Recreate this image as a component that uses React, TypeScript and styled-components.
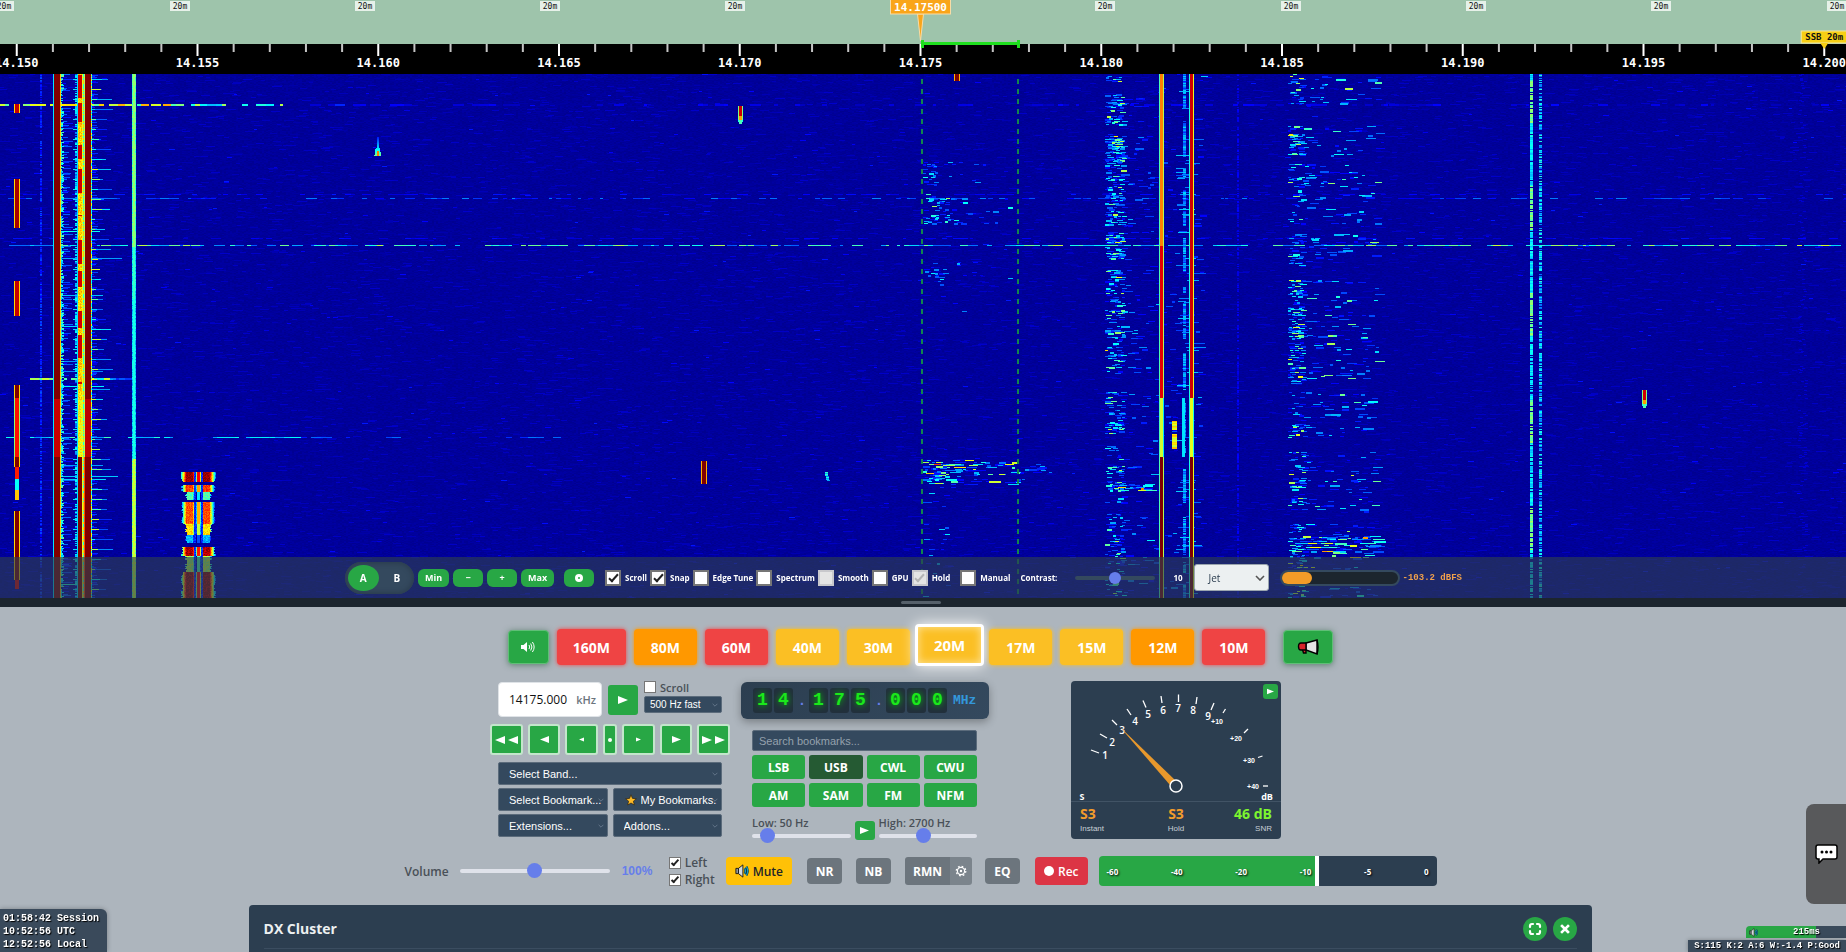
import React, { useEffect, useRef } from "react";
import styled, { createGlobalStyle, css } from "styled-components";

const ui = '"Open Sans", "Noto Sans", sans-serif';
const arial = '"Liberation Sans", Arial, sans-serif';
const mono = '"Liberation Mono", "Courier New", monospace';
const rulerMono = '"DejaVu Sans Mono", Consolas, monospace';

const green = "#28a745";
const navy = "#2c3e50";
const slate = "#34495e";
const accent = "#667eea";

const GlobalStyle = createGlobalStyle`
  *, *::before, *::after { box-sizing: border-box; }
  body { margin: 0; background: #adb5bd; font-family: ${ui}; }
  button, input, select { font-family: inherit; margin: 0; }
  button { padding: 0; border: 0; cursor: pointer; }
`;

/* ---------- waterfall painting ---------- */

const WF_W = 1846;
const WF_H = 524;

function makeRng(seed: number) {
  let s = seed;
  return () => {
    s = (s * 1664525 + 1013904223) >>> 0;
    return s / 4294967296;
  };
}

const clamp = (v: number) => Math.max(0, Math.min(1, v));

function paintWaterfall(ctx: CanvasRenderingContext2D) {
  const rnd = makeRng(20175);
  const f = new Float32Array(WF_W * WF_H);
  const put = (x: number, y: number, v: number) => {
    x |= 0;
    y |= 0;
    if (x >= 0 && x < WF_W && y >= 0 && y < WF_H) f[y * WF_W + x] = v;
  };
  const lift = (x: number, y: number, v: number) => {
    x |= 0;
    y |= 0;
    if (x >= 0 && x < WF_W && y >= 0 && y < WF_H && f[y * WF_W + x] < v) f[y * WF_W + x] = v;
  };
  const run = (x: number, y: number, len: number, v: number, h = 1) => {
    for (let j = 0; j < h; j++) for (let i = 0; i < len; i++) lift(x + i, y + j, v);
  };

  // noise floor
  for (let y = 0; y < WF_H; y++)
    for (let x = 0; x < WF_W; x += 2) {
      const v = 0.016 + rnd() * 0.02;
      put(x, y, v);
      put(x + 1, y, v);
    }
  for (let i = 0; i < 13000; i++) run(rnd() * WF_W, rnd() * WF_H, 3 + rnd() * 7, 0.03 + rnd() * 0.045);
  for (let i = 0; i < 450; i++) run(rnd() * WF_W, rnd() * WF_H, 2 + rnd() * 4, 0.09 + rnd() * 0.06);

  // horizontal static crashes
  const crash = (y: number, x0: number, x1: number, lo: number, hi: number, fill: number, h = 1) => {
    let x = x0;
    while (x < x1) {
      const len = 2 + rnd() * 9;
      if (rnd() < fill) run(x, y, len, lo + rnd() * (hi - lo), h);
      x += len;
    }
  };
  crash(171, 0, WF_W, 0.2, 0.5, 0.75);
  crash(171, 0, WF_W, 0.45, 0.58, 0.08);
  crash(124, 0, WF_W, 0.1, 0.26, 0.4);
  crash(120, 0, WF_W, 0.08, 0.15, 0.3);
  crash(164, 0, WF_W, 0.08, 0.14, 0.35);
  crash(363, 0, 300, 0.25, 0.45, 0.6);
  crash(363, 300, 560, 0.1, 0.25, 0.5);
  crash(30, 0, 165, 0.4, 0.72, 0.85, 2);
  crash(30, 165, 285, 0.25, 0.6, 0.65, 2);
  crash(30, 285, 370, 0.08, 0.2, 0.5, 2);
  crash(30, 370, WF_W, 0.05, 0.13, 0.35, 2);
  crash(304, 30, 105, 0.3, 0.65, 0.8, 2);
  crash(304, 105, 135, 0.1, 0.25, 0.6, 2);

  // faint carriers
  for (let y = 0; y < WF_H; y++) {
    if (rnd() < 0.75) run(40, y, 2, 0.09 + rnd() * 0.12);
    if (rnd() < 0.6) run(1237, y, 2, 0.07 + rnd() * 0.06);
    if (rnd() < 0.3) run(1798 + rnd() * 8, y, 3, 0.08);
  }

  // splatter and strong carriers on the left
  for (let y = 0; y < WF_H; y++) {
    const deep = y > 382;
    const mid = y > 324 && y <= 382;
    if (rnd() < 0.85) run(60, y, 1 + rnd() * 3, 0.28 + rnd() * 0.2);
    if (rnd() < 0.3) run(63, y, 2 + rnd() * 8, 0.1 + rnd() * 0.14);
    if (rnd() < 0.6) run(75, y, 3, 0.2 + rnd() * 0.2);
    if (rnd() < 0.5) run(91, y, 2 + rnd() * 5, 0.08 + rnd() * 0.12);
    if (y % 10 === 5) {
      run(91, y, 3 + rnd() * 8, 0.3 + rnd() * 0.3);
      run(95, y, 4 + rnd() * 14, 0.15 + rnd() * 0.2);
      run(73, y, 6, 0.35);
    }
    if (rnd() < 0.02) run(60, y, 18 + rnd() * 45, 0.22 + rnd() * 0.2);
    put(53, y, 0.35);
    for (let x = 54; x < 60; x++) put(x, y, mid ? 0.93 : 1);
    put(60, y, 0.68);
    put(77, y, 0.35);
    const hot = Math.sin(y / 13) + Math.sin(y / 5.3) > 0;
    for (let x = 78; x < 82; x++) put(x, y, deep ? 1 : mid ? 0.55 + rnd() * 0.15 : hot ? 0.92 : 0.62 + rnd() * 0.12);
    put(82, y, 0.6);
    put(83, y, rnd() < 0.5 ? 0.4 : 0.68);
    put(84, y, deep ? 0.8 : 0.55);
    for (let x = 85; x < 91; x++) put(x, y, mid ? 0.94 : 1);
    put(91, y, rnd() < 0.5 ? 0.38 : 0.6);
    const c = y > 384 ? 0.58 : y > 224 ? 0.4 : y > 172 ? 0.43 : 0.52;
    for (let x = 132; x < 136; x++) put(x, y, x === 132 || x === 135 ? c - 0.14 * rnd() : c);
  }

  // keyed carrier
  const keyed = (cx: number, y0: number, y1: number, core: number, edge = 0.66) => {
    for (let y = y0; y < y1; y++) {
      for (let x = cx - 2; x <= cx + 1; x++) put(x, y, core);
      put(cx - 3, y, edge);
      put(cx + 2, y, edge);
    }
  };
  keyed(17, 30, 39, 0.93);
  keyed(17, 105, 154, 0.96);
  keyed(17, 207, 242, 0.93);
  keyed(17, 311, 324, 1);
  keyed(17, 324, 383, 0.86, 0.52);
  keyed(17, 383, 393, 1);
  for (let y = 393; y < 426; y++) run(15, y, 4, y < 405 ? 0.85 : y < 416 ? 0.38 : 0.68);
  keyed(17, 437, 506, 1);
  for (let y = 506; y < 515; y++) run(15, y, 4, 0.9);
  keyed(704, 387, 410, 1, 0.7);
  keyed(957, 0, 7, 1, 0.7);

  // short pings
  for (let y = 63; y < 82; y++) {
    const half = y < 74 ? 1 : 2 + (y - 74) / 6;
    run(378 - half, y, half * 2, 0.15 + ((y - 63) / 19) * 0.35);
    if (y > 76) run(377, y, 2, 0.75);
  }
  const ping = (cx: number, y0: number) => {
    for (let y = y0; y < y0 + 18; y++) {
      const t = (y - y0) / 18;
      const core = t < 0.55 ? 0.92 : t < 0.75 ? 0.72 : 0.45;
      const edge = t < 0.75 ? 0.5 : 0.4;
      for (let x = cx - 2; x < cx + 3; x++) {
        const side = x === cx - 2 || x === cx + 2;
        if (!(side && t > 0.85)) put(x, y, side ? edge : core);
      }
    }
  };
  ping(740, 32);
  ping(1644, 316);
  for (let y = 398; y < 407; y++) run(825 + Math.floor((y - 398) / 4), y, 3, 0.25 + rnd() * 0.2);

  // burst near 14.155
  const blocks: [number, number, number][] = [
    [398, 408, 0.98],
    [411, 418, 0.82],
    [418, 426, 0.45],
    [428, 450, 0.8],
    [450, 461, 0.66],
    [461, 469, 0.3],
    [473, 482, 0.95],
    [482, 498, 0.55],
    [498, 524, 0.98],
  ];
  blocks.forEach(([a, b, v]) => {
    for (let y = a; y < b; y++) {
      const shrink = Math.floor((v < 0.7 ? 4 : 0) + rnd() * 3);
      for (let x = 181 + shrink; x < 216 - shrink; x++) {
        const dx = Math.min(Math.abs(x - 189), Math.abs(x - 206));
        let val = v - Math.max(0, dx - 3) * 0.12 + (rnd() - 0.5) * 0.1;
        if (x === 194 || x === 195 || x === 201 || x === 202) val = 0.12 + rnd() * 0.1;
        if (x > 196 && x < 200) val = v - 0.1;
        if (val > 0.1) put(x, y, Math.min(1, val));
      }
    }
  });

  // speech energy
  const voice = (x0: number, x1: number, y0: number, y1: number, density: number, hi: number, maxLen = 6) => {
    for (let y = y0; y < y1; y += 1 + (rnd() < 0.6 ? 1 : 0)) {
      const gain = 0.4 + 0.6 * Math.abs(Math.sin(y / 6.1));
      for (let x = x0; x < x1; x += 3) {
        if (rnd() < density * gain) run(x + rnd() * 3, y, 2 + rnd() * maxLen, 0.12 + rnd() * rnd() * hi, rnd() < 0.25 ? 2 : 1);
      }
    }
  };
  voice(923, 934, 88, 124, 0.35, 0.45, 3);
  voice(934, 985, 88, 112, 0.06, 0.3, 4);
  voice(923, 945, 124, 150, 0.3, 0.5, 3);
  voice(940, 1012, 124, 150, 0.1, 0.5, 4);
  voice(923, 943, 189, 211, 0.28, 0.35, 4);
  voice(945, 1012, 160, 240, 0.012, 0.25, 4);
  voice(923, 940, 386, 411, 0.6, 0.8);
  voice(940, 1018, 386, 411, 0.26, 0.65, 10);
  voice(1018, 1050, 390, 408, 0.1, 0.3, 8);
  voice(923, 945, 411, 524, 0.06, 0.3, 4);

  const leftVoice: [number, number, number][] = [
    [0, 8, 0.3],
    [20, 52, 0.65],
    [60, 84, 0.75],
    [84, 152, 0.65],
    [158, 186, 0.8],
    [196, 232, 0.5],
    [236, 300, 0.45],
    [318, 360, 0.5],
    [372, 386, 0.25],
    [392, 430, 0.35],
    [440, 524, 0.4],
  ];
  leftVoice.forEach(([a, b, d]) => {
    voice(1105, 1121, a, b, d, 0.55, 4);
    voice(1121, 1148, a, b, 0.06, 0.28, 7);
  });
  voice(1108, 1119, 66, 80, 0.8, 0.65, 4);
  voice(1148, 1200, 0, 524, 0.022, 0.25, 6);
  voice(1110, 1150, 410, 418, 0.3, 0.75, 8);

  const rightVoice: [number, number, number][] = [
    [0, 30, 0.5],
    [52, 82, 0.65],
    [90, 150, 0.25],
    [160, 192, 0.45],
    [206, 262, 0.5],
    [262, 310, 0.65],
    [318, 366, 0.3],
    [378, 440, 0.35],
    [450, 524, 0.4],
  ];
  rightVoice.forEach(([a, b, d]) => {
    voice(1288, 1303, a, b, d, 0.55, 5);
    voice(1303, 1376, a, b, 0.08, 0.5, 8);
  });
  voice(1290, 1380, 462, 484, 0.28, 0.8, 10);
  voice(1288, 1300, 250, 262, 0.6, 0.8);

  // carriers on the right
  for (let y = 0; y < WF_H; y++) {
    const weak = y >= 324 && y < 383;
    const core1 = weak ? 0.58 : y < 172 ? 0.75 : y < 324 ? 0.9 : 1;
    put(1159, y, 0.45);
    for (let x = 1160; x < 1163; x++) put(x, y, core1);
    put(1163, y, weak ? 0.35 : 0.55);
    const core2 = weak ? 0.6 : y < 324 ? 0.92 : 1;
    put(1189, y, 0.4);
    for (let x = 1190; x < 1193; x++) put(x, y, core2);
    put(1193, y, weak ? 0.4 : 0.6);
    if (Math.sin(y / 9) + Math.sin(y / 3.7) + rnd() > 0.1) run(1183, y, 3, 0.16 + rnd() * 0.18);
    if (rnd() < 0.1) run(1176 + rnd() * 12, y, 6 + rnd() * 14, 0.18 + rnd() * 0.15);
    if (rnd() < 0.85) run(1530, y, 3, 0.3 + rnd() * 0.1 + (Math.sin(y / 17) > 0.3 ? 0.14 : 0));
    if (rnd() < 0.68) run(1539, y, 3, 0.22 + rnd() * 0.2);
    if (weak) run(1182, y, 3, 0.35);
  }
  for (let y = 347; y < 375; y++) if (y < 356 || y > 359) run(1172, y, 5, 0.55 + rnd() * 0.15);

  const img = ctx.createImageData(WF_W, WF_H);
  for (let i = 0; i < f.length; i++) {
    const v = f[i];
    img.data[i * 4] = 255 * clamp(1.5 - Math.abs(4 * v - 3));
    img.data[i * 4 + 1] = 255 * clamp(1.5 - Math.abs(4 * v - 2));
    img.data[i * 4 + 2] = 255 * clamp(1.5 - Math.abs(4 * v - 1));
    img.data[i * 4 + 3] = 255;
  }
  ctx.putImageData(img, 0, 0);
}

/* ---------- frequency ruler ---------- */

const at = (px: number) => `${(px / WF_W) * 100}%`;
const khzAt = (khz: number) => at(920.5 + (khz - 14175) * 36.15);

const RulerSvg = styled.svg`
  display: block;
  width: 100%;
  height: 74px;
  background: #9ec4ab;
`;

function Ruler() {
  const bands = [4, 180, 365, 550, 735, 920, 1105, 1291, 1476, 1661, 1837];
  const ticks = Array.from({ length: 52 }, (_, i) => 14150 + i);
  return (
    <RulerSvg role="img" aria-label="Frequency scale">
      <rect x="0" y="44" width="100%" height="30" fill="#000" />
      {bands.map((b) => (
        <svg key={b} x={at(b)} overflow="visible">
          <rect x="-10" y="1" width="20" height="10" fill="#e6f1e9" />
          <text x="0" y="9" textAnchor="middle" fontFamily={rulerMono} fontSize="8" fill="#111">20m</text>
        </svg>
      ))}
      {ticks.map((k) => (
        <svg key={k} x={khzAt(k)} overflow="visible">
          {k % 5 === 0 ? (
            <>
              <rect x="-1" y="44" width="2" height="12" fill="#fff" />
              <text x="0" y="67" textAnchor="middle" fontFamily={rulerMono} fontSize="12" fontWeight="700" fill="#fff">
                {(k / 1000).toFixed(3)}
              </text>
            </>
          ) : (
            <rect x="-1" y="44" width="2" height="8" fill="#c4c4c4" />
          )}
        </svg>
      ))}
      <svg x={khzAt(14200)} overflow="visible">
        <rect x="-23" y="31" width="46" height="12" fill="#f7cf15" stroke="#f3e6a0" />
        <text x="-19" y="40" fontFamily={rulerMono} fontSize="9" fontWeight="700" fill="#111">SSB 20m</text>
        <path d="M-4 43H4L0 49Z" fill="#f7cf15" />
      </svg>
      <svg x={at(922)} overflow="visible">
        <rect x="0" y="42" width="97" height="3" fill="#1fe01f" />
        <rect x="-1" y="40" width="3" height="8" fill="#1fe01f" />
        <rect x="95" y="40" width="3" height="8" fill="#1fe01f" />
      </svg>
      <svg x={khzAt(14175)} overflow="visible">
        <path d="M-3 14H3L0 41Z" fill="#f9a51a" stroke="#f8dca6" />
        <rect x="-30" y="-1" width="60" height="15" fill="#f9a51a" stroke="#f8dca6" />
        <text x="0" y="11" textAnchor="middle" fontFamily={rulerMono} fontSize="11" fontWeight="700" fill="#fff">14.17500</text>
      </svg>
    </RulerSvg>
  );
}

const WaterfallArea = styled.section`
  position: relative;
  height: 524px;
  background: #00008c;
`;
const WaterfallCanvas = styled.canvas`
  display: block;
  width: 100%;
  height: 100%;
`;
const Passband = styled.svg`
  position: absolute;
  inset: 0;
  width: 100%;
  height: 100%;
`;

function Waterfall({ children }: { children: React.ReactNode }) {
  const ref = useRef<HTMLCanvasElement>(null);
  useEffect(() => {
    const ctx = ref.current?.getContext("2d");
    if (ctx) paintWaterfall(ctx);
  }, []);
  return (
    <WaterfallArea>
      <WaterfallCanvas ref={ref} width={WF_W} height={WF_H} />
      <Passband aria-hidden="true">
        <g stroke="#12854e" strokeWidth="2" strokeDasharray="5 5">
          <line x1={at(922)} x2={at(922)} y1="5" y2="100%" />
          <line x1={at(1018)} x2={at(1018)} y1="5" y2="100%" />
        </g>
      </Passband>
      {children}
    </WaterfallArea>
  );
}

/* ---------- shared controls ---------- */

const Range = styled.input.attrs({ type: "range" })<{ $thin?: boolean }>`
  appearance: none;
  display: block;
  width: 100%;
  height: ${(p) => (p.$thin ? 12 : 15)}px;
  background: transparent;
  &::-webkit-slider-runnable-track {
    height: 4px;
    border-radius: 2px;
    background: ${(p) => (p.$thin ? slate : "#dfe2ea")};
  }
  &::-webkit-slider-thumb {
    appearance: none;
    width: ${(p) => (p.$thin ? 12 : 15)}px;
    height: ${(p) => (p.$thin ? 12 : 15)}px;
    margin-top: ${(p) => (p.$thin ? -4 : -6)}px;
    border-radius: 50%;
    background: ${accent};
  }
`;

const Tick = styled.input.attrs({ type: "checkbox" })<{ $size?: number }>`
  appearance: none;
  flex: none;
  display: grid;
  place-items: center;
  width: ${(p) => p.$size ?? 12}px;
  height: ${(p) => p.$size ?? 12}px;
  border: ${(p) => (p.$size ? 2 : 1)}px solid #767676;
  background: #fff;
  &:checked::before {
    content: "";
    width: ${(p) => (p.$size ? 5 : 4)}px;
    height: ${(p) => (p.$size ? 10 : 8)}px;
    margin-bottom: 3px;
    border: solid #222;
    border-width: 0 2px 2px 0;
    transform: rotate(42deg);
  }
  &:disabled {
    background: #e4e4e4;
    border-color: #c8c8cc;
  }
  &:disabled::before {
    border-color: #b4b4b4;
  }
`;

const chevron = (color: string) =>
  `url("data:image/svg+xml,%3Csvg xmlns='http://www.w3.org/2000/svg' viewBox='0 0 10 6'%3E%3Cpath d='M1 1l4 4 4-4' fill='none' stroke='%23${color}' stroke-width='1.6'/%3E%3C/svg%3E")`;

const Select = styled.select<{ $small?: boolean }>`
  appearance: none;
  display: block;
  width: 100%;
  height: ${(p) => (p.$small ? 17 : 23)}px;
  padding: 0 4px 0 ${(p) => (p.$small ? 5 : 10)}px;
  border: 1px solid #5b6b7b;
  border-radius: 2px;
  background: ${slate} ${chevron("64778a")} no-repeat right 3px center / 6px 4px;
  color: #fff;
  font: ${(p) => (p.$small ? 10 : 11)}px ${arial};
`;

const Arrow = ({ size = 9, left = false }: { size?: number; left?: boolean }) => (
  <svg width={size} height={size} viewBox="0 0 10 10" aria-hidden="true">
    <path d={left ? "M10 1V9L0 5Z" : "M0 1V9L10 5Z"} fill="#fff" />
  </svg>
);

const SpeakerColor = ({ size = 14 }: { size?: number }) => (
  <svg width={size} height={size} viewBox="0 0 16 16" aria-hidden="true">
    <path d="M1 5h3v6H1Z" fill="#8f979d" stroke="#111" />
    <path d="M4 5l5-4v14l-5-4Z" fill="#d5dadd" stroke="#111" />
    <path d="M11 5q2 3 0 6M13 3q3 5 0 10" fill="none" stroke="#0a3a4a" strokeWidth="2.6" />
    <path d="M11 5q2 3 0 6M13 3q3 5 0 10" fill="none" stroke="#1aa0c8" strokeWidth="1.2" />
  </svg>
);

/* ---------- overlay toolbar ---------- */

const Toolbar = styled.div`
  position: absolute;
  left: 0;
  right: 0;
  bottom: 0;
  display: flex;
  align-items: center;
  justify-content: center;
  height: 41px;
  padding-right: 39px;
  background: rgba(44, 62, 80, 0.65);
  color: #fff;
  font-size: 8px;
  font-weight: 700;
`;
const VfoSwitch = styled.div`
  display: flex;
  gap: 3px;
  width: 69px;
  height: 32px;
  padding: 3px 2px 3px 3px;
  border-radius: 16px;
  background: ${slate};
  box-shadow: inset 0 0 4px 2px ${navy};
  margin-right: 4px;
`;
const VfoButton = styled.button<{ $on?: boolean }>`
  flex: 1;
  border-radius: 50%;
  background: ${(p) => (p.$on ? green : "transparent")};
  color: #fff;
  font-size: 10px;
  font-weight: 700;
`;
const MiniButton = styled.button<{ $w: number }>`
  width: ${(p) => p.$w}px;
  height: 18px;
  margin-right: 4px;
  border-radius: 6px;
  background: ${green};
  color: #fff;
  font-size: 9px;
  font-weight: 700;
  line-height: 16px;
`;
const Dot = styled.span`
  display: block;
  width: 8px;
  height: 8px;
  margin: 0 auto;
  border: 3px solid #fff;
  border-radius: 50%;
`;
const Checks = styled.div`
  display: flex;
  gap: 3px;
  margin: 0 10px 0 7px;
`;
const CheckLabel = styled.label`
  display: flex;
  align-items: center;
  gap: 4px;
  white-space: nowrap;
`;
const ContrastLabel = styled.label`
  display: flex;
  align-items: center;
  gap: 18px;
  margin: 0 18px 0 10px;
  input { width: 80px; }
`;
const PaletteSelect = styled.select`
  appearance: none;
  width: 75px;
  height: 27px;
  margin: 0 11px;
  padding: 0 4px;
  text-indent: 10px;
  border: 1px solid #9aa5ae;
  border-radius: 3px;
  background: #ecf0f1 ${chevron("555555")} no-repeat right 3px center / 10px 6px;
  color: ${navy};
  font-size: 10px;
`;
const LevelTrack = styled.div`
  width: 120px;
  height: 16px;
  border: 2px solid ${slate};
  border-radius: 8px;
  background: #1c252e;
`;
const LevelFill = styled.div`
  width: 26%;
  height: 100%;
  border-radius: 6px;
  background: #f39c28;
`;
const LevelText = styled.output`
  margin-left: 3px;
  color: #f0a04c;
  font: 700 9px ${mono};
`;

const Divider = styled.div`
  display: flex;
  justify-content: center;
  align-items: center;
  height: 9px;
  padding-right: 5px;
  background: #1c252e;
  &::after {
    content: "";
    width: 40px;
    height: 3px;
    border-radius: 2px;
    background: #56606a;
  }
`;

/* ---------- panel ---------- */

const Page = styled.div`
  display: flex;
  flex-direction: column;
  min-height: 100vh;
`;
const Panel = styled.main`
  flex: 1;
  display: flex;
  flex-direction: column;
  align-items: center;
  padding: 17px 5px 0 0;
  background: #adb5bd;
`;
const BandRow = styled.div`
  display: flex;
  align-items: center;
  gap: 8px;
`;
const IconButton = styled.button<{ $w: number }>`
  display: grid;
  place-items: center;
  width: ${(p) => p.$w}px;
  height: 34px;
  border: 1px solid #5fbf76;
  border-radius: 4px;
  background: ${green};
  box-shadow: 0 1px 6px rgba(40, 90, 60, 0.6);
`;
const BandButton = styled.button<{ $bg: string; $on?: boolean }>`
  min-width: 63px;
  height: 36px;
  padding: 0 16px;
  border-radius: 4px;
  background: ${(p) => p.$bg};
  box-shadow: 0 0 4px ${(p) => p.$bg};
  color: #fff;
  font-size: 14px;
  font-weight: 700;
  ${(p) =>
    p.$on &&
    css`
      height: 42px;
      margin: 0 -3px 4px;
      border: 3px solid #fff;
      box-shadow: 0 0 14px #fff, inset 0 0 8px #fde6a4;
      font-size: 15px;
    `}
`;
const Spacer = styled.span`
  width: 2px;
`;

const Controls = styled.div`
  display: flex;
  align-items: flex-start;
  gap: 11px;
  margin-top: 11px;
  padding-right: 70px;
`;
const TuneColumn = styled.div`
  width: 240px;
`;
const TuneTop = styled.div`
  display: flex;
  gap: 6px;
  height: 36px;
  padding: 0 8px;
`;
const FreqBox = styled.label`
  display: flex;
  align-items: center;
  width: 104px;
  height: 35px;
  margin-top: 1px;
  padding: 0 5px 0 10px;
  border: 1px solid #dfe3e7;
  border-radius: 4px;
  background: #fff;
  color: #6c757d;
  font-size: 11px;
  font-weight: 600;
  input {
    flex: 1;
    min-width: 0;
    padding: 0;
    border: 0;
    outline: 0;
    color: #111;
    font-size: 12px;
  }
`;
const GoButton = styled.button<{ $w: number; $h: number }>`
  display: grid;
  place-items: center;
  width: ${(p) => p.$w}px;
  height: ${(p) => p.$h}px;
  border-radius: 3px;
  background: ${green};
`;
const GoWrap = styled.div`
  padding-top: 4px;
`;
const ScrollBlock = styled.div`
  flex: 1;
  display: grid;
  gap: 3px;
  align-content: start;
`;
const FormLabel = styled.label<{ $size?: number }>`
  display: flex;
  align-items: center;
  gap: 4px;
  height: 12px;
  color: #495057;
  font-size: ${(p) => p.$size ?? 11}px;
  font-weight: 600;
`;
const StepRow = styled.div`
  display: flex;
  gap: 5px;
  margin-top: 7px;
`;
const StepButton = styled.button<{ $tiny?: boolean }>`
  flex: ${(p) => (p.$tiny ? "0 0 14px" : "1")};
  display: flex;
  justify-content: center;
  align-items: center;
  gap: 3px;
  height: 31px;
  border: 2px solid #c3e6cb;
  border-radius: 3px;
  background: ${green};
`;
const SelectGrid = styled.div`
  display: grid;
  grid-template-columns: 1fr 1fr;
  gap: 3px 5px;
  margin-top: 7px;
  padding: 0 8px;
`;
const WideCell = styled.div`
  grid-column: 1 / -1;
`;
const StarSelect = styled.div`
  position: relative;
  svg {
    position: absolute;
    left: 12px;
    top: 6px;
  }
  select { padding-left: 27px; }
`;

const ModeColumn = styled.div`
  width: 248px;
`;
const Readout = styled.div`
  display: flex;
  align-items: center;
  height: 37px;
  margin-top: 1px;
  padding: 0 12px;
  border-radius: 6px;
  background: linear-gradient(135deg, ${navy}, ${slate});
  box-shadow: 0 3px 8px rgba(0, 0, 0, 0.3);
`;
const Digit = styled.span`
  width: 19px;
  height: 25px;
  margin-right: 2px;
  border-radius: 3px;
  background: #22303c;
  color: #1be81b;
  font: 700 18px/24px ${mono};
  text-align: center;
  text-shadow: 0 0 6px #0c0;
`;
const Point = styled.span`
  width: 14px;
  color: ${accent};
  font: 700 14px/24px ${mono};
  text-align: center;
`;
const Unit = styled.span`
  margin-left: 4px;
  color: #3498db;
  font: 700 13px ${mono};
`;
const ModeBody = styled.div`
  padding: 11px 12px 0 11px;
`;
const Search = styled.input`
  display: block;
  width: 100%;
  height: 21px;
  padding: 0 6px;
  border: 1px solid #5b6b7b;
  border-radius: 2px;
  background: ${slate};
  color: #fff;
  font: 11px ${arial};
  &::placeholder { color: #94a1ad; }
`;
const ModeGrid = styled.div`
  display: grid;
  grid-template-columns: repeat(4, 1fr);
  gap: 4px;
  margin-top: 4px;
`;
const ModeButton = styled.button<{ $on?: boolean }>`
  height: 24px;
  border-radius: 3px;
  background: ${(p) => (p.$on ? "#255a33" : green)};
  color: #fff;
  font-size: 12px;
  font-weight: 700;
`;
const FilterRow = styled.div`
  display: flex;
  gap: 4px;
  margin-top: 9px;
`;
const FilterField = styled.div`
  flex: 1;
  white-space: nowrap;
`;
const FilterGo = styled.div`
  padding-top: 5px;
`;

const Meter = styled.section`
  position: relative;
  width: 210px;
  margin-left: 71px;
  border-radius: 4px;
  background: ${navy};
  svg { display: block; }
`;
const MeterGo = styled.div`
  position: absolute;
  top: 3px;
  right: 3px;
`;
const MeterReadouts = styled.div`
  display: grid;
  grid-template-columns: repeat(3, 1fr);
  height: 38px;
  padding: 3px 9px;
  border-top: 1px solid #415365;
`;
const Reading = styled.div<{ $align: string; $color: string }>`
  color: #c8cfd6;
  font: 8px/10px ${arial};
  text-align: ${(p) => p.$align};
  strong {
    display: block;
    margin-bottom: 1px;
    color: ${(p) => p.$color};
    font: 700 14px/18px ${ui};
  }
`;

const marks: [string, number, number, number, number, number, number][] = [
  ["1", 20, 69, 28, 72, 34, 74],
  ["2", 29, 53, 36, 57, 41, 61],
  ["3", 41, 39, 46, 44, 51, 49],
  ["4", 56, 28, 60, 34, 64, 40],
  ["5", 72, 19.5, 75, 26.5, 77, 33],
  ["6", 90, 15, 91, 22, 92, 29],
  ["7", 107.5, 13.5, 107.5, 21, 107, 27],
  ["8", 126, 16, 125, 23, 122, 29],
  ["9", 143, 22, 140, 29, 137, 35],
  ["+10", 154.5, 28, 152, 32, 146, 40],
  ["+20", 177, 48, 173, 52, 165, 57],
  ["+30", 191.5, 75, 187, 76.5, 178, 79],
  ["+40", 197, 105, 192, 105, 182, 105],
];

function SMeter() {
  return (
    <Meter>
      <svg width="210" height="120" viewBox="0 0 210 120" role="img" aria-label="Signal meter">
        {marks.map(([t, x1, y1, x2, y2, tx, ty]) => (
          <g key={t}>
            <line x1={x1} y1={y1} x2={x2} y2={y2} stroke="#fff" strokeWidth="1.3" />
            <text x={tx} y={ty + (t.length > 1 ? 2.5 : 3.5)} textAnchor="middle" fill="#fff" fontFamily={t.length > 1 ? arial : ui} fontWeight={t.length > 1 ? 700 : 600} fontSize={t.length > 1 ? 7 : 10}>
              {t}
            </text>
          </g>
        ))}
        <text x="11" y="119" textAnchor="middle" fill="#fff" fontFamily={ui} fontWeight="700" fontSize="9">S</text>
        <text x="196" y="119" textAnchor="middle" fill="#fff" fontFamily={ui} fontWeight="700" fontSize="9">dB</text>
        <path d="M48.5 45.5L104 99L99 104Z" fill="#e8982c" />
        <circle cx="105" cy="105" r="6" fill={navy} stroke="#fff" strokeWidth="1.5" />
      </svg>
      <MeterReadouts>
        <Reading $align="left" $color="#f39c2c"><strong>S3</strong>Instant</Reading>
        <Reading $align="center" $color="#f39c2c"><strong>S3</strong>Hold</Reading>
        <Reading $align="right" $color="#7df52f"><strong>46 dB</strong>SNR</Reading>
      </MeterReadouts>
      <MeterGo>
        <GoButton $w={15} $h={15} aria-label="Meter mode"><Arrow size={7} /></GoButton>
      </MeterGo>
    </Meter>
  );
}

const AudioRow = styled.div`
  display: flex;
  align-items: center;
  margin-top: 13px;
`;
const VolumeLabel = styled.label`
  display: flex;
  align-items: center;
  gap: 11px;
  color: #495057;
  font-size: 12px;
  font-weight: 600;
  input { width: 150px; }
`;
const VolumeValue = styled.output`
  width: 47px;
  padding-left: 12px;
  color: ${accent};
  font: 700 12px ${arial};
`;
const Channels = styled.div`
  display: grid;
  gap: 5px;
  width: 57px;
  padding-left: 12px;
`;
const AudioButton = styled.button<{ $tone: "grey" | "yellow" | "red"; $gap: number }>`
  display: flex;
  align-items: center;
  justify-content: center;
  gap: 4px;
  min-width: 35px;
  height: ${(p) => (p.$tone === "grey" ? 26 : 28)}px;
  padding: 0 ${(p) => (p.$tone === "grey" ? 4 : 9)}px;
  margin-left: ${(p) => p.$gap}px;
  border-radius: 4px;
  background: ${(p) => ({ grey: "#6c757d", yellow: "#ffc107", red: "#dc3545" })[p.$tone]};
  color: ${(p) => (p.$tone === "yellow" ? "#212529" : "#fff")};
  font-size: 12px;
  font-weight: ${(p) => (p.$tone === "grey" ? 700 : 600)};
`;
const Split = styled.div`
  display: flex;
  height: 28px;
  margin-left: 14px;
  border-radius: 3px;
  overflow: hidden;
`;
const SplitMain = styled.button`
  width: 45px;
  background: #6c757d;
  color: #fff;
  font-size: 12px;
  font-weight: 700;
`;
const SplitGear = styled.button`
  display: grid;
  place-items: center;
  width: 22px;
  background: #7b848c;
`;
const RecDot = styled.span`
  width: 10px;
  height: 10px;
  border-radius: 50%;
  background: #fff;
`;
const AudioMeter = styled.div`
  display: flex;
  justify-content: space-between;
  align-items: center;
  width: 338px;
  height: 30px;
  margin-left: 11px;
  padding: 0 8px;
  border-radius: 4px;
  background: linear-gradient(90deg, ${green} 64%, #fff 64%, #fff 65%, ${navy} 65%);
  color: #fff;
  font-size: 8px;
  font-weight: 700;
  text-shadow: 1px 1px 2px #000;
`;

const Cluster = styled.section`
  flex: 1;
  width: 73%;
  margin-top: 19px;
  padding: 0 15px;
  border-radius: 4px 4px 0 0;
  background: ${navy};
`;
const ClusterHead = styled.header`
  display: flex;
  align-items: center;
  gap: 6px;
  height: 44px;
  padding-top: 4px;
  border-bottom: 1px solid #3b4d60;
  h2 {
    flex: 1;
    margin: 0;
    color: #ecf0f1;
    font-size: 14px;
    font-weight: 700;
  }
`;
const RoundButton = styled.button`
  display: grid;
  place-items: center;
  width: 24px;
  height: 24px;
  border-radius: 50%;
  background: ${green};
`;

/* ---------- floating widgets ---------- */

const Clock = styled.aside`
  position: fixed;
  left: 0;
  bottom: 0;
  padding: 3px 8px 1px 3px;
  border-radius: 0 6px 0 0;
  background: #3a4a5b;
  box-shadow: 0 0 5px rgba(0, 0, 0, 0.3);
  color: #fff;
  font: 700 10px/13px ${mono};
  text-shadow: 1px 1px 1px #000;
  white-space: pre;
`;
const ChatTab = styled.button`
  position: fixed;
  right: 0;
  bottom: 48px;
  display: grid;
  place-items: center;
  width: 40px;
  height: 100px;
  border-radius: 8px 0 0 8px;
  background: #58595b;
`;
const StatusStack = styled.aside`
  position: fixed;
  right: 0;
  bottom: 0;
  display: flex;
  flex-direction: column;
  align-items: flex-end;
  gap: 2px;
  color: #fff;
  font: 700 9px/12px ${mono};
  text-shadow: 1px 1px 1px #000;
`;
const Latency = styled.div`
  display: flex;
  align-items: center;
  justify-content: space-between;
  width: 100px;
  height: 12px;
  padding: 0 26px 0 3px;
  border-radius: 4px 0 0 0;
  background: linear-gradient(90deg, ${green} 70%, #3a4a5b 70%);
`;
const Conditions = styled.div`
  height: 12px;
  padding: 0 6px;
  background: #3a4a5b;
  box-shadow: 0 0 4px rgba(0, 0, 0, 0.3);
`;

const bandButtons: [string, string][] = [
  ["160M", "#ef4444"],
  ["80M", "#ff9800"],
  ["60M", "#ef4444"],
  ["40M", "#fbbf24"],
  ["30M", "#fbbf24"],
  ["20M", "#fbbf24"],
  ["17M", "#fbbf24"],
  ["15M", "#fbbf24"],
  ["12M", "#ff9800"],
  ["10M", "#ef4444"],
];
const checks: [string, boolean, boolean][] = [
  ["Scroll", true, false],
  ["Snap", true, false],
  ["Edge Tune", false, false],
  ["Spectrum", false, false],
  ["Smooth", false, true],
  ["GPU", false, false],
  ["Hold", true, true],
];

export default function App() {
  return (
    <Page>
      <GlobalStyle />
      <Ruler />
      <Waterfall>
        <Toolbar>
          <VfoSwitch>
            <VfoButton $on>A</VfoButton>
            <VfoButton>B</VfoButton>
          </VfoSwitch>
          <MiniButton $w={31}>Min</MiniButton>
          <MiniButton $w={30}>−</MiniButton>
          <MiniButton $w={30}>+</MiniButton>
          <MiniButton $w={33}>Max</MiniButton>
          <Spacer /><Spacer /><Spacer />
          <MiniButton $w={30} aria-label="Center"><Dot /></MiniButton>
          <Checks>
            {checks.map(([name, on, off]) => (
              <CheckLabel key={name}>
                <Tick $size={16} defaultChecked={on} disabled={off} />
                {name}
              </CheckLabel>
            ))}
          </Checks>
          <CheckLabel><Tick $size={16} />Manual</CheckLabel>
          <ContrastLabel>Contrast:<Range $thin defaultValue={50} /></ContrastLabel>
          10
          <PaletteSelect aria-label="Palette"><option>Jet</option></PaletteSelect>
          <LevelTrack><LevelFill /></LevelTrack>
          <LevelText>-103.2 dBFS</LevelText>
        </Toolbar>
      </Waterfall>
      <Divider />
      <Panel>
        <BandRow>
          <IconButton $w={41} aria-label="Audio">
            <svg width="14" height="12" viewBox="0 0 14 12" aria-hidden="true">
              <path d="M0 4h2.500L6 1v10L2.500 8H0Z" fill="#fff" />
              <path d="M8 4q1.500 2 0 4M9.700 2.500q2.500 3.500 0 7M11.400 1q3.500 5 0 10" fill="none" stroke="#fff" />
            </svg>
          </IconButton>
          {bandButtons.map(([name, bg]) => (
            <BandButton key={name} $bg={bg} $on={name === "20M"}>{name}</BandButton>
          ))}
          <Spacer />
          <IconButton $w={50} aria-label="Announcements">
            <svg width="22" height="16" viewBox="0 0 22 16" aria-hidden="true">
              <path d="M5 9h4v5H6.500Z" fill="#d8232a" stroke="#000" strokeWidth="1.400" />
              <path d="M9 4L20 1v14L9 11Z" fill="#e4e4e4" stroke="#000" strokeWidth="1.400" />
              <path d="M9 4H4Q1.500 4 1.500 7.500T4 11h5Z" fill="#d8232a" stroke="#000" strokeWidth="1.400" />
              <path d="M20 1q2 7 0 14" fill="none" stroke="#000" strokeWidth="1.400" />
            </svg>
          </IconButton>
        </BandRow>

        <Controls>
          <TuneColumn>
            <TuneTop>
              <FreqBox>
                <input defaultValue="14175.000" aria-label="Frequency" />
                kHz
              </FreqBox>
              <GoWrap><GoButton $w={30} $h={30} aria-label="Tune"><Arrow size={10} /></GoButton></GoWrap>
              <ScrollBlock>
                <FormLabel><Tick />Scroll</FormLabel>
                <Select $small aria-label="Tuning step"><option>500 Hz fast</option></Select>
              </ScrollBlock>
            </TuneTop>
            <StepRow>
              <StepButton aria-label="Back fastest"><Arrow size={10} left /><Arrow size={10} left /></StepButton>
              <StepButton aria-label="Back faster"><Arrow size={9} left /></StepButton>
              <StepButton aria-label="Back"><Arrow size={5} left /></StepButton>
              <StepButton $tiny aria-label="Round">
                <svg width="4" height="4" viewBox="0 0 4 4" aria-hidden="true"><circle cx="2" cy="2" r="2" fill="#fff" /></svg>
              </StepButton>
              <StepButton aria-label="Forward"><Arrow size={5} /></StepButton>
              <StepButton aria-label="Forward faster"><Arrow size={9} /></StepButton>
              <StepButton aria-label="Forward fastest"><Arrow size={10} /><Arrow size={10} /></StepButton>
            </StepRow>
            <SelectGrid>
              <WideCell><Select aria-label="Band"><option>Select Band...</option></Select></WideCell>
              <Select aria-label="Bookmark"><option>Select Bookmark...</option></Select>
              <StarSelect>
                <Select aria-label="My bookmarks"><option>My Bookmarks...</option></Select>
                <svg width="12" height="12" viewBox="0 0 12 12" aria-hidden="true">
                  <path d="M6 .8l1.500 3.600 3.800.3-2.900 2.500.9 3.800L6 9l-3.300 2 .9-3.800L.7 4.700l3.800-.3Z" fill="#fdb927" stroke="#2b2413" strokeWidth=".7" />
                </svg>
              </StarSelect>
              <Select aria-label="Extensions"><option>Extensions...</option></Select>
              <Select aria-label="Addons"><option>Addons...</option></Select>
            </SelectGrid>
          </TuneColumn>

          <ModeColumn>
            <Readout>
              <Digit>1</Digit><Digit>4</Digit><Point>.</Point>
              <Digit>1</Digit><Digit>7</Digit><Digit>5</Digit><Point>.</Point>
              <Digit>0</Digit><Digit>0</Digit><Digit>0</Digit>
              <Unit>MHz</Unit>
            </Readout>
            <ModeBody>
              <Search placeholder="Search bookmarks..." aria-label="Search bookmarks" />
              <ModeGrid>
                {["LSB", "USB", "CWL", "CWU", "AM", "SAM", "FM", "NFM"].map((m) => (
                  <ModeButton key={m} $on={m === "USB"}>{m}</ModeButton>
                ))}
              </ModeGrid>
              <FilterRow>
                <FilterField>
                  <FormLabel htmlFor="low">Low: 50 Hz</FormLabel>
                  <Range id="low" defaultValue={10} />
                </FilterField>
                <FilterGo><GoButton $w={20} $h={19} aria-label="Apply filter"><Arrow size={9} /></GoButton></FilterGo>
                <FilterField>
                  <FormLabel htmlFor="high">High: 2700 Hz</FormLabel>
                  <Range id="high" defaultValue={45} />
                </FilterField>
              </FilterRow>
            </ModeBody>
          </ModeColumn>

          <SMeter />
        </Controls>

        <AudioRow>
          <VolumeLabel>Volume<Range defaultValue={50} /></VolumeLabel>
          <VolumeValue>100%</VolumeValue>
          <Channels>
            <FormLabel $size={12}><Tick defaultChecked />Left</FormLabel>
            <FormLabel $size={12}><Tick defaultChecked />Right</FormLabel>
          </Channels>
          <AudioButton $tone="yellow" $gap={12}><SpeakerColor />Mute</AudioButton>
          <AudioButton $tone="grey" $gap={15}>NR</AudioButton>
          <AudioButton $tone="grey" $gap={14}>NB</AudioButton>
          <Split>
            <SplitMain>RMN</SplitMain>
            <SplitGear aria-label="RMN settings">
              <svg width="12" height="12" viewBox="0 0 12 12" aria-hidden="true">
                <circle cx="6" cy="6" r="3.600" fill="none" stroke="#fff" strokeWidth="1.200" />
                <circle cx="6" cy="6" r="4.800" fill="none" stroke="#fff" strokeWidth="1.200" strokeDasharray="1.800 1.970" />
                <circle cx="6" cy="6" r="1.200" fill="#fff" />
              </svg>
            </SplitGear>
          </Split>
          <AudioButton $tone="grey" $gap={13}>EQ</AudioButton>
          <AudioButton $tone="red" $gap={15}><RecDot />Rec</AudioButton>
          <AudioMeter>
            {["-60", "-40", "-20", "-10", "-5", "0"].map((v) => (
              <span key={v}>{v}</span>
            ))}
          </AudioMeter>
        </AudioRow>

        <Cluster>
          <ClusterHead>
            <h2>DX Cluster</h2>
            <RoundButton aria-label="Expand">
              <svg width="14" height="14" viewBox="0 0 14 14" aria-hidden="true">
                <path d="M2 5V4Q2 2 4 2H5M9 2h1q2 0 2 2V5M12 9v1q0 2-2 2H9M5 12H4Q2 12 2 10V9" fill="none" stroke="#fff" strokeWidth="2.200" strokeLinecap="round" />
              </svg>
            </RoundButton>
            <RoundButton aria-label="Close">
              <svg width="10" height="10" viewBox="0 0 10 10" aria-hidden="true">
                <path d="M2 2L8 8M8 2L2 8" stroke="#fff" strokeWidth="2.600" strokeLinecap="square" />
              </svg>
            </RoundButton>
          </ClusterHead>
        </Cluster>
      </Panel>

      <Clock>
        <div>01:58:42 Session</div>
        <div>10:52:56 UTC</div>
        <div>12:52:56 Local</div>
      </Clock>
      <ChatTab aria-label="Chat">
        <svg width="23" height="20" viewBox="0 0 23 20" aria-hidden="true">
          <path d="M3 1H20Q22 1 22 3V13Q22 15 20 15H8L4 19V15H3Q1 15 1 13V3Q1 1 3 1Z" fill="#fff" stroke="#000" strokeWidth="1.500" />
          <circle cx="7" cy="8" r="1.500" /><circle cx="11.500" cy="8" r="1.500" /><circle cx="16" cy="8" r="1.500" />
        </svg>
      </ChatTab>
      <StatusStack>
        <Latency><SpeakerColor size={9} />215ms</Latency>
        <Conditions>S:115 K:2 A:6 W:-1.4 P:Good</Conditions>
      </StatusStack>
    </Page>
  );
}
